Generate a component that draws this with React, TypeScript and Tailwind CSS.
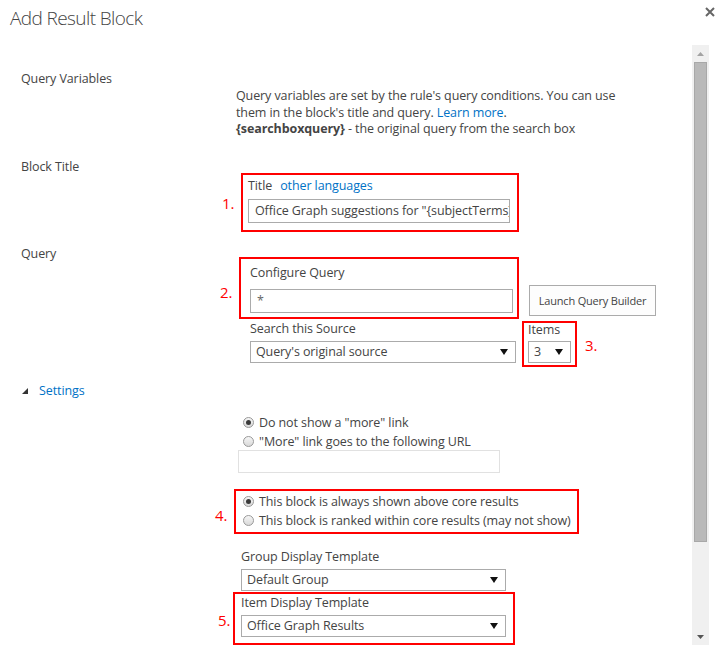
import React from "react";

const Red = ({ children, className }: { children: React.ReactNode; className: string }) => (
  <span className={"absolute text-[15px] leading-[18px] tracking-normal text-[#f00] " + className}>{children}</span>
);

const Arrow = () => (
  <svg width="8" height="6" viewBox="0 0 8 6" className="shrink-0">
    <polygon points="0,0 8,0 4,6" fill="#111" />
  </svg>
);

const Select = ({ value, className }: { value: string; className: string }) => (
  <div className={"h-[22px] border border-[#ababab] bg-white flex items-center justify-between pl-[5px] pr-[7px] " + className}>
    <span className="text-[#444] leading-[16px] whitespace-nowrap">{value}</span>
    <Arrow />
  </div>
);

const Radio = ({ checked, label }: { checked?: boolean; label: string }) => (
  <div className="h-[17px] flex items-center gap-[5px]">
    <span className="w-[11px] h-[11px] rounded-full border border-[#999] bg-gradient-to-b from-[#f6f6f6] to-[#d9d9d9] flex items-center justify-center shrink-0">
      {checked && <span className="w-[5px] h-[5px] rounded-full bg-[#3a3a3a]" />}
    </span>
    <span className="whitespace-nowrap leading-[16px]">{label}</span>
  </div>
);

export default function App() {
  return (
    <div className="w-[720px] h-[651px] bg-white overflow-hidden flex flex-col font-['Open_Sans','Noto_Sans',sans-serif] text-[12.5px] tracking-[-0.1px] leading-[16px] text-[#444]">
      <header className="h-[45px] shrink-0 flex items-start justify-between">
        <h1 className="pl-[10px] pt-[4px] text-[19px] tracking-[-0.6px] leading-[28px] font-light text-[#444]">Add Result Block</h1>
        <svg width="10" height="10" viewBox="0 0 10 10" className="mt-[7px] mr-[5px]">
          <path d="M1 1 L9 9 M9 1 L1 9" stroke="#666" strokeWidth="2" />
        </svg>
      </header>

      <div className="flex flex-1 min-h-0">
        <main className="flex-1 min-w-0 overflow-hidden">
          {/* Query Variables */}
          <div className="flex mt-[26px]">
            <div className="w-[236px] shrink-0 pl-[21px]">Query Variables</div>
            <div className="mt-[17px] w-[390px] leading-[16.5px]">
              Query variables are set by the rule's query conditions. You can use them in the block's title and query.{" "}
              <span className="text-[#0072c6]">Learn more</span>.
              <br />
              <span className="font-bold">{"{searchboxquery}"}</span> - the original query from the search box
            </div>
          </div>

          {/* Block Title */}
          <div className="flex mt-[21.5px]">
            <div className="w-[236px] shrink-0 pl-[21px]">Block Title</div>
            <div className="relative mt-[14px] ml-[5px] w-[278px] border-2 border-[#f00] pt-[3px] pb-[7px] pl-[5px]">
              <Red className="-left-[21px] top-[19px]">1.</Red>
              <div className="flex gap-[8px]">
                <span>Title</span>
                <span className="text-[#0072c6]">other languages</span>
              </div>
              <div className="mt-[5px] w-[262px] h-[24px] border border-[#ababab] flex items-center pl-[6px] overflow-hidden whitespace-nowrap">
                Office Graph suggestions for "{"{subjectTerms}"}"
              </div>
            </div>
          </div>

          {/* Query */}
          <div className="flex mt-[14px]">
            <div className="w-[236px] shrink-0 pl-[21px]">Query</div>
            <div className="flex flex-col">
              <div className="flex items-start mt-[11px] ml-[3px]">
                <div className="relative w-[280px] border-2 border-[#f00] pt-[6px] pb-[4px] pl-[9px]">
                  <Red className="-left-[21px] top-[24px]">2.</Red>
                  <div>Configure Query</div>
                  <div className="mt-[8px] w-[263px] h-[24px] border border-[#ababab] flex items-center pl-[6px] text-[#666]">*</div>
                </div>
                <div className="mt-[28px] ml-[10px] w-[127px] h-[31px] border border-[#ababab] bg-[#fdfdfd] flex items-center justify-center text-[11px] tracking-[-0.2px]">
                  Launch Query Builder
                </div>
              </div>
              <div className="flex items-start mt-[2px] ml-[14px]">
                <div className="flex flex-col">
                  <div>Search this Source</div>
                  <Select value="Query's original source" className="mt-[4px] w-[266px]" />
                </div>
                <div className="relative ml-[6px] w-[55px] border-2 border-[#f00] pl-[4px] pb-[2px]">
                  <Red className="left-[61px] top-[13px]">3.</Red>
                  <div className="leading-[13px]">Items</div>
                  <Select value="3" className="mt-[5px] w-[43px]" />
                </div>
              </div>
            </div>
          </div>

          {/* Settings */}
          <div className="flex items-center mt-[16px] pl-[22px] gap-[11px]">
            <svg width="6" height="6" viewBox="0 0 6 6">
              <polygon points="6,0 6,6 0,6" fill="#333" />
            </svg>
            <span className="text-[#0072c6]">Settings</span>
          </div>

          <div className="ml-[238px] mt-[15px] flex flex-col">
            <div className="flex flex-col gap-[2px] pl-[5px]">
              <Radio checked label={'Do not show a "more" link'} />
              <Radio label={'"More" link goes to the following URL'} />
            </div>
            <div className="w-[262px] h-[23px] border border-[#e1e1e1]" />

            <div className="relative mt-[16px] -ml-[4px] w-[345px] border-2 border-[#f00] pt-[2px] pb-[3px] pl-[7px] flex flex-col gap-[2px]">
              <Red className="-left-[21px] top-[15px]">4.</Red>
              <Radio checked label="This block is always shown above core results" />
              <Radio label="This block is ranked within core results (may not show)" />
            </div>

            <div className="mt-[15px] ml-[3px]">Group Display Template</div>
            <Select value="Default Group" className="mt-[4px] ml-[3px] w-[265px]" />

            <div className="relative mt-[1px] -ml-[5px] w-[282px] border-2 border-[#f00] pt-[1px] pb-[6px] pl-[6px]">
              <Red className="-left-[17px] top-[17px]">5.</Red>
              <div>Item Display Template</div>
              <Select value="Office Graph Results" className="mt-[4px] w-[265px]" />
            </div>
          </div>
        </main>

        <div className="w-[17px] mr-[11px] mb-[6px] shrink-0 bg-[#f0f0f0] flex flex-col items-center">
          <div className="h-[17px] flex items-center justify-center">
            <svg width="7" height="4" viewBox="0 0 7 4">
              <polygon points="0,4 7,4 3.5,0" fill="#a3a3a3" />
            </svg>
          </div>
          <div className="w-[13px] h-[480px] bg-[#b9b9b9] border border-[#a8a8a8]" />
          <div className="flex-1" />
          <div className="h-[17px] flex items-center justify-center">
            <svg width="7" height="4" viewBox="0 0 7 4">
              <polygon points="0,0 7,0 3.5,4" fill="#555" />
            </svg>
          </div>
        </div>
      </div>
    </div>
  );
}
